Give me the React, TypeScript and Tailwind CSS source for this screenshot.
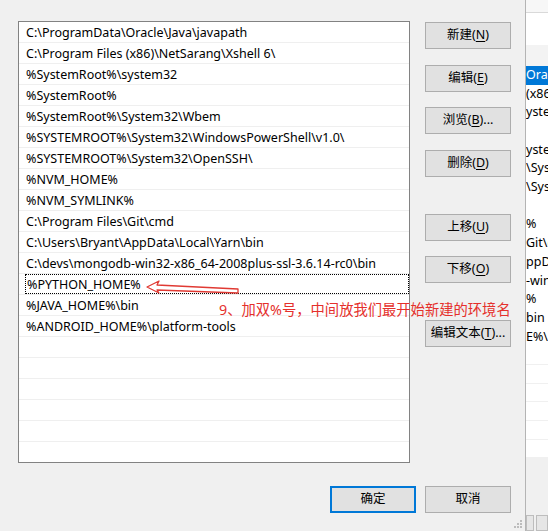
import React from "react";

const PATHS = [
  "C:\\ProgramData\\Oracle\\Java\\javapath",
  "C:\\Program Files (x86)\\NetSarang\\Xshell 6\\",
  "%SystemRoot%\\system32",
  "%SystemRoot%",
  "%SystemRoot%\\System32\\Wbem",
  "%SYSTEMROOT%\\System32\\WindowsPowerShell\\v1.0\\",
  "%SYSTEMROOT%\\System32\\OpenSSH\\",
  "%NVM_HOME%",
  "%NVM_SYMLINK%",
  "C:\\Program Files\\Git\\cmd",
  "C:\\Users\\Bryant\\AppData\\Local\\Yarn\\bin",
  "C:\\devs\\mongodb-win32-x86_64-2008plus-ssl-3.6.14-rc0\\bin",
  "%PYTHON_HOME%",
  "%JAVA_HOME%\\bin",
  "%ANDROID_HOME%\\platform-tools",
];

const FOCUSED = 12;
const TOTAL_ROWS = 21;

// tails of the window that sits behind the dialog
const BEHIND = [
  "Oracle",
  "(x86)\\",
  "ystem32",
  "",
  "ystem32",
  "\\System32",
  "\\System32",
  "",
  "%",
  "Git\\cmd",
  "ppData",
  "-win32",
  "%",
  "bin",
  "E%\\",
];

type BtnProps = {
  label: string;
  hotkey?: string;
  suffix?: string;
  className?: string;
  primary?: boolean;
};

function WinButton({ label, hotkey, suffix = "", className = "", primary }: BtnProps) {
  return (
    <button
      className={
        "flex h-[27px] w-[86px] items-center justify-center bg-[#e1e1e1] text-[12.5px] text-black " +
        (primary ? "border-2 border-[#0078d7] " : "border border-[#adadad] ") +
        className
      }
    >
      <span>{label}</span>
      {hotkey && (
        <span>
          (<span className="underline underline-offset-2">{hotkey}</span>){suffix}
        </span>
      )}
    </button>
  );
}

function PathList() {
  const rows = Array.from({ length: TOTAL_ROWS }, (_, i) => PATHS[i] ?? "");
  return (
    <div className="h-[442px] w-[392px] shrink-0 overflow-hidden border border-[#828282] bg-white">
      {rows.map((p, i) => (
        <div
          key={i}
          className="flex h-[21px] border-b border-[#efefef] pl-[6px] text-[12.5px] text-black"
        >
          <div
            className={
              "flex flex-1 items-center whitespace-nowrap pl-[1px] pt-[3px] " +
              (i === FOCUSED ? "border border-dotted border-black" : "")
            }
          >
            {p}
          </div>
        </div>
      ))}
    </div>
  );
}

function BehindWindow() {
  return (
    <div className="flex h-full w-[22px] shrink-0 flex-col overflow-hidden bg-[#f0f0f0] text-[12.5px]">
      <div className="h-[13px] shrink-0 border-b border-[#d9d9d9] bg-[#f7f7f7]" />
      <div className="h-[32px] shrink-0 bg-white" />
      <div className="h-[21px] shrink-0 bg-[#f3f3f3]" />
      <div className="flex h-[392px] shrink-0 flex-col bg-white">
        {BEHIND.map((t, i) => (
          <div
            key={i}
            className={
              "flex h-[18.7px] shrink-0 items-center whitespace-nowrap " +
              (i === 0 ? "bg-[#0078d7] text-white" : "text-black")
            }
          >
            {t}
          </div>
        ))}
        {Array.from({ length: 6 }, (_, i) => (
          <div key={i} className="h-[18.7px] shrink-0 border-b border-[#f0f0f0]" />
        ))}
      </div>
      <div className="flex-1" />
      <div className="flex h-[16px] gap-[2px]">
        <div className="w-[8px] border border-[#bdbdbd] bg-[#e6e6e6]" />
        <div className="flex-1 border border-[#bdbdbd] bg-[#e6e6e6]" />
      </div>
    </div>
  );
}

export default function App() {
  return (
    <div className="flex h-[531px] w-[548px] overflow-hidden bg-[#f0f0f0] font-[family-name:'Segoe_UI','Noto_Sans','Noto_Sans_CJK_SC',sans-serif]">
      <div className="relative flex h-full w-[526px] shrink-0 flex-col border-r border-[#b4b4b4] bg-[#f0f0f0] pl-[18px] pt-[21px]">
        <div className="flex">
          <PathList />
          <div className="ml-[15px] flex w-[86px] flex-col">
            <WinButton label="新建" hotkey="N" className="mt-[1px]" />
            <WinButton label="编辑" hotkey="E" className="mt-[16px]" />
            <WinButton label="浏览" hotkey="B" suffix="..." className="mt-[15px]" />
            <WinButton label="删除" hotkey="D" className="mt-[16px]" />
            <WinButton label="上移" hotkey="U" className="mt-[37px]" />
            <WinButton label="下移" hotkey="O" className="mt-[15px]" />
            <WinButton label="编辑文本" hotkey="T" suffix="..." className="mt-[37px]" />
          </div>
        </div>

        <div className="mt-[23px] flex justify-end gap-[9px] pr-[14px]">
          <WinButton label="确定" primary />
          <WinButton label="取消" />
        </div>

        {/* annotation pasted over the screenshot */}
        <svg
          className="absolute left-0 top-0"
          width="260"
          height="310"
          viewBox="0 0 260 310"
          fill="none"
        >
          <polygon
            points="147,287 159,281 157,285 238,289 238,293 157,290 159,293"
            stroke="#e03a33"
            strokeWidth="1.3"
            strokeLinejoin="round"
          />
        </svg>
        <div className="absolute left-[219px] top-[301px] whitespace-nowrap text-[14.3px] leading-[18px] text-[#e5302c]">
          9、加双%号，中间放我们最开始新建的环境名
        </div>

        {/* resize grip */}
        <svg className="absolute bottom-[3px] right-[3px]" width="8" height="8" viewBox="0 0 8 8">
          <rect x="6" y="0" width="2" height="2" fill="#bcbcbc" />
          <rect x="3" y="3" width="2" height="2" fill="#bcbcbc" />
          <rect x="6" y="3" width="2" height="2" fill="#bcbcbc" />
          <rect x="0" y="6" width="2" height="2" fill="#bcbcbc" />
          <rect x="3" y="6" width="2" height="2" fill="#bcbcbc" />
          <rect x="6" y="6" width="2" height="2" fill="#bcbcbc" />
        </svg>
      </div>
      <BehindWindow />
    </div>
  );
}
